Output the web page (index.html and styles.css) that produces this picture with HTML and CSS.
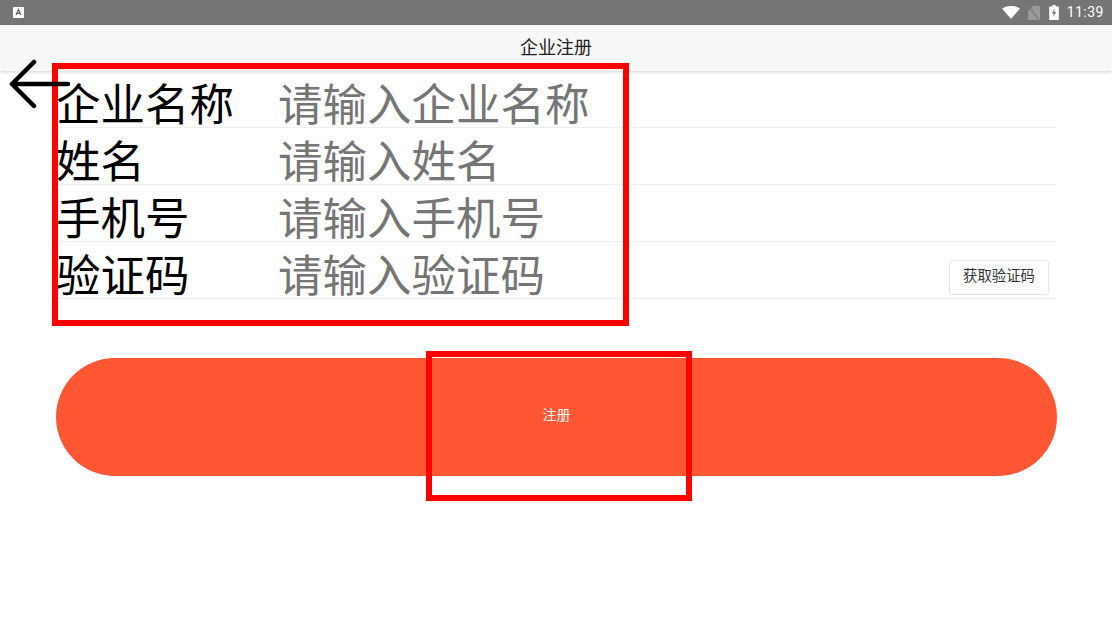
FILE: index.html
```html
<!DOCTYPE html>
<html lang="zh">
<head>
<meta charset="utf-8">
<title>企业注册</title>
<link rel="stylesheet" href="styles.css">
</head>
<body>
<div class="status">
  <svg class="app-icon" width="11" height="11" viewBox="0 0 11 11"><rect width="11" height="11" rx="1" fill="#fff"/><path d="M3 8 5.5 2.5 8 8M4 6.3h3" fill="none" stroke="#666" stroke-width="1.3"/></svg>
  <div class="status-right">
    <svg class="wifi" width="18" height="13" viewBox="0 0 18 13"><path d="M0 2.5C5 -.8 13 -.8 18 2.5L9 13Z" fill="#fff"/></svg>
    <svg class="sim" width="12" height="14" viewBox="0 0 12 14"><path d="M0 14V5L5 0H12V14Z" fill="#9a9a9a"/><path d="M1 1 11 13.5" stroke="#757575" stroke-width="1.2"/></svg>
    <svg class="battery" width="10" height="15" viewBox="0 0 9 14"><path d="M3 0H6V1.5H9V14H0V1.5H3Z" fill="#fff"/><path d="M5.2 3 2.6 8H4.3L3.7 11.5 6.6 6.5H4.8Z" fill="#757575"/></svg>
    <span class="clock">11:39</span>
  </div>
</div>
<header class="nav">企业注册</header>
<main class="page">
  <form class="form">
    <div class="row"><span class="label">企业名称</span><span class="hint">请输入企业名称</span></div>
    <div class="row"><span class="label">姓名</span><span class="hint">请输入姓名</span></div>
    <div class="row"><span class="label">手机号</span><span class="hint">请输入手机号</span></div>
    <div class="row"><span class="label">验证码</span><span class="hint">请输入验证码</span><span class="code">获取验证码</span></div>
    <div class="submit">注册</div>
  </form>
</main>
<div class="mark mark-form"></div>
<div class="mark mark-submit"></div>
<svg class="back" width="62" height="50" viewBox="0 0 62 50"><path d="M59 25H4M25 3 3 25 25 47" fill="none" stroke="#000" stroke-width="4.5" stroke-linecap="round" stroke-linejoin="round"/></svg>
</body>
</html>
```
FILE: styles.css
```css
* { box-sizing: border-box; }
html, body { margin: 0; height: 625px; overflow: hidden; background: #fff; }
body { font-family: "Noto Sans CJK SC", "Liberation Sans", sans-serif; position: relative; }
.status { height: 25px; background: #757575; display: flex; align-items: center; justify-content: space-between; padding: 0 8px 0 13px; }
.status-right { display: flex; align-items: center; }
.sim { margin-left: 8px; }
.battery { margin-left: 9px; }
.clock { font: 14px/25px Roboto, sans-serif; color: #fff; letter-spacing: .5px; margin-left: 8px; }
.nav { height: 46px; background: #f7f7f7; box-shadow: 0 1px 3px rgba(0,0,0,.18); text-align: center; font-size: 18px; line-height: 43px; color: #222; }
.back { position: absolute; left: 9px; top: 59px; }
.page { padding: 0 56px; }
.form { display: flex; flex-direction: column; }
.row { height: 57px; padding-top: 6px; border-bottom: 1px solid #eeeeee; display: flex; align-items: center; position: relative; }
.label { width: 222px; flex: none; font-size: 44.5px; line-height: 50px; color: #000; white-space: nowrap; }
.hint { font-size: 44.5px; line-height: 50px; color: #757575; white-space: nowrap; }
.code { position: absolute; right: 7px; top: 18px; width: 100px; height: 35px; border: 1px solid #e5e5e5; border-radius: 3px; font-size: 14.4px; line-height: 28px; text-align: center; color: #333; }
.submit { margin-top: 59px; height: 118px; border-radius: 59px; background: #ff5733; color: #fff; font-size: 14px; line-height: 112px; text-align: center; margin-right: -1px; }
.mark { position: absolute; border: 6px solid #f00; }
.mark-form { left: 52px; top: 63px; width: 577px; height: 263px; }
.mark-submit { left: 426px; top: 351px; width: 266px; height: 150px; }
```
